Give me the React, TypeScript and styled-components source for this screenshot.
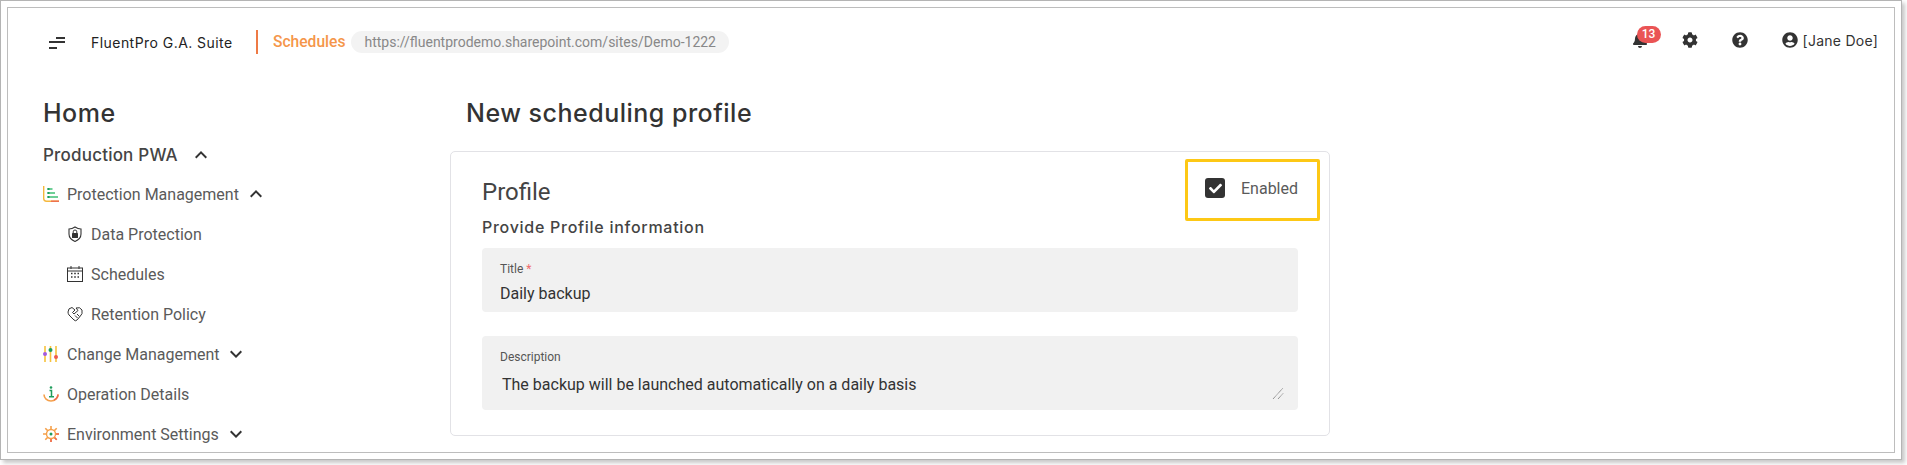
import { ReactNode } from 'react';
import styled, { createGlobalStyle } from 'styled-components';
import { FaBell, FaCog, FaQuestionCircle, FaUserCircle, FaCheck } from 'react-icons/fa';
import { MdKeyboardArrowUp, MdKeyboardArrowDown } from 'react-icons/md';

const GlobalStyle = createGlobalStyle`
  html, body {
    margin: 0;
    height: 100%;
    background: #fff;
    overflow: hidden;
  }
  body {
    font-family: Roboto, "Liberation Sans", sans-serif;
  }
`;

const heading = `Inter, "Open Sans", sans-serif`;

const Screenshot = styled.div`
  box-sizing: border-box;
  width: 1902px;
  height: 460px;
  padding: 6px;
  border: 1px solid #b4b4b4;
  background: #fff;
  box-shadow: 3px 3px 4px rgba(0, 0, 0, 0.22);
`;
const Frame = styled.div`
  box-sizing: border-box;
  height: 100%;
  border: 1px solid #bdbdbd;
  overflow: hidden;
`;
const Header = styled.header`
  height: 68px;
  display: flex;
  align-items: center;
  padding: 0 16px 0 39px;
`;
const MenuButton = styled.svg`
  width: 20px;
  height: 14px;
  margin-right: 24px;
`;
const Brand = styled.span`
  width: 141px;
  font-family: ${heading};
  font-size: 14px;
  letter-spacing: 0.45px;
  color: #222;
  white-space: nowrap;
`;
const Divider = styled.span`
  width: 2px;
  height: 24px;
  margin: 0 15px 0 24px;
  background: #ee7a45;
`;
const Section = styled.span`
  font-size: 15.6px;
  font-weight: 500;
  color: #f5964a;
  margin-right: 6px;
`;
const UrlPill = styled.span`
  height: 22px;
  line-height: 22px;
  padding: 0 13px;
  border-radius: 11px;
  background: #f3f3f3;
  color: #888;
  font-size: 14px;
  white-space: nowrap;
`;
const Actions = styled.div`
  margin-left: auto;
  margin-bottom: 4px;
  display: flex;
  align-items: center;
  color: #333;
`;
const IconSlot = styled.span`
  position: relative;
  display: flex;
  width: 16px;
  height: 16px;
  margin-right: 34px;
  font-size: 16px;
`;
const Badge = styled.span`
  position: absolute;
  left: 5px;
  top: -6px;
  width: 24px;
  height: 17px;
  border-radius: 9px;
  background: #ea5455;
  color: #fff;
  font-size: 12px;
  font-weight: 500;
  line-height: 17px;
  text-align: center;
`;
const User = styled.span`
  display: flex;
  align-items: center;
  gap: 5px;
  font-family: ${heading};
  font-size: 14px;
  letter-spacing: 0.25px;
  color: #333;
  & > svg {
    font-size: 16px;
  }
`;
const Main = styled.main`
  display: grid;
  grid-template-columns: 442px 880px;
  padding-top: 16px;
`;
const Sidebar = styled.nav`
  padding-left: 35px;
`;
const HomeTitle = styled.h1`
  margin: 0 0 2px;
  height: 40px;
  line-height: 42px;
  font-family: ${heading};
  font-size: 25px;
  letter-spacing: 0.5px;
  font-weight: 500;
  color: #333;
`;
const NavRow = styled.div<{ $level: number }>`
  display: flex;
  align-items: center;
  height: 40px;
  padding-left: ${(p) => p.$level * 24}px;
  color: #5a5a5a;
  font-size: 16px;
  white-space: nowrap;
`;
const GroupRow = styled(NavRow)`
  padding-top: 1px;
  box-sizing: border-box;
  font-family: ${heading};
  font-size: 17px;
  letter-spacing: 0.2px;
  font-weight: 500;
  color: #444;
`;
const NavIcon = styled.svg`
  flex: none;
  width: 16px;
  height: 16px;
  margin-right: 8px;
`;
const Chevron = styled.span<{ $gap: number; $size: number }>`
  display: flex;
  margin-left: ${(p) => p.$gap}px;
  font-size: ${(p) => p.$size}px;
  color: #333;
`;
const Content = styled.section``;
const PageTitle = styled.h2`
  margin: 0 0 19px 16px;
  height: 40px;
  line-height: 42px;
  font-family: ${heading};
  font-size: 25px;
  letter-spacing: 0.5px;
  font-weight: 500;
  color: #333;
`;
const Card = styled.div`
  position: relative;
  box-sizing: border-box;
  height: 285px;
  padding: 22px 31px 0 31px;
  border: 1px solid #e2e2e6;
  border-radius: 5px;
`;
const CardTitle = styled.h3`
  margin: 0 0 7px;
  height: 36px;
  line-height: 36px;
  font-size: 24px;
  font-weight: 400;
  color: #444;
`;
const Subtitle = styled.h4`
  margin: 0 0 11px;
  height: 20px;
  line-height: 20px;
  font-family: ${heading};
  font-size: 16px;
  letter-spacing: 0.72px;
  font-weight: 500;
  color: #444;
`;
const Field = styled.div<{ $height: number; $gap: number }>`
  position: relative;
  box-sizing: border-box;
  height: ${(p) => p.$height}px;
  margin-bottom: ${(p) => p.$gap}px;
  padding: 14px 18px 0;
  background: #f1f1f1;
  border-radius: 4px;
`;
const FieldLabel = styled.div`
  height: 14px;
  line-height: 14px;
  font-size: 12px;
  color: #555;
`;
const Required = styled.span`
  color: #ee6b6e;
`;
const FieldValue = styled.div<{ $indent?: number; $top: number }>`
  margin: ${(p) => p.$top}px 0 0 ${(p) => p.$indent ?? 0}px;
  height: 20px;
  line-height: 20px;
  font-size: 16px;
  color: #333;
`;
const Resizer = styled.svg`
  position: absolute;
  right: 14px;
  bottom: 11px;
  width: 12px;
  height: 12px;
`;
const Highlight = styled.div`
  position: absolute;
  top: 7px;
  right: 9px;
  box-sizing: border-box;
  width: 135px;
  height: 62px;
  display: flex;
  align-items: center;
  padding: 0 0 4px 17px;
  gap: 16px;
  border: 3px solid #fdc815;
  border-radius: 2px;
  background: #fff;
  color: #5a5a5a;
  font-size: 16px;
`;
const CheckBox = styled.span`
  display: flex;
  align-items: center;
  justify-content: center;
  width: 20px;
  height: 20px;
  border-radius: 3px;
  background: #333;
  color: #fff;
  font-size: 13px;
`;

const ProtectionIcon = () => (
  <NavIcon viewBox="0 0 16 16" fill="none">
    <path d="M0.700 0V12.500Q0.700 15.200 3.500 15.200H16" stroke="#f5b83d" strokeWidth="1.400" />
    <path d="M8 15.200H16" stroke="#ee6a50" strokeWidth="1.400" />
    <path d="M4.500 3H9.500M4.500 7H12M4.500 11H15" stroke="#6fcf97" strokeWidth="2.200" />
    <path d="M4.500 3H6.500M4.500 7H6.500M4.500 11H6.500" stroke="#1f9d5c" strokeWidth="2.200" />
  </NavIcon>
);
const ShieldIcon = () => (
  <NavIcon viewBox="0 0 16 16" fill="none">
    <path d="M2 3Q5 3 8 1Q11 3 14 3V8Q14 13 8 15.400Q2 13 2 8Z" stroke="#333" strokeWidth="1.100" />
    <rect x="5" y="7" width="6" height="5" rx="0.600" fill="#333" />
    <path d="M6.200 7V5.800A1.800 1.800 0 0 1 9.800 5.800V7" stroke="#333" strokeWidth="1" />
  </NavIcon>
);
const CalendarIcon = () => (
  <NavIcon viewBox="0 0 16 16" fill="none">
    <rect x="0.500" y="2" width="15" height="13.500" stroke="#333" />
    <path d="M4 0V3M12 0V3M0.500 5H15.500" stroke="#333" />
    <path d="M4 7.500H5.500M7.200 7.500H8.800M10.500 7.500H12M4 11H5.500M7.200 11H8.800M10.500 11H12" stroke="#333" strokeWidth="1.400" />
  </NavIcon>
);
const RetentionIcon = () => (
  <NavIcon viewBox="0 0 16 16" fill="none" stroke="#333" strokeWidth="1">
    <path d="M1 6Q1 2 5 1.500L8 4L5.500 6.500L7 8L11 4.500L9 2Q13 0.500 15 4Q16 8 13 10.500L10 14Q8.500 15.500 7 14L2 9Q1 7.500 1 6Z" />
    <path d="M8 9.500L10.500 12M10 8L12.500 10.500" />
  </NavIcon>
);
const ChangeIcon = () => (
  <NavIcon viewBox="0 0 16 16" fill="none">
    <path d="M2 0V16M7.500 0V16M13 0V16" stroke="#f7c23c" strokeWidth="1.600" />
    <circle cx="2" cy="8" r="2" fill="#a35be0" />
    <circle cx="7.500" cy="4" r="2" fill="#1f9d5c" />
    <circle cx="13" cy="11" r="2" fill="#ee5a4f" />
  </NavIcon>
);
const InfoIcon = () => (
  <NavIcon viewBox="0 0 16 16" fill="none">
    <path d="M1 8.500A7 6.500 0 0 0 15 8.500" stroke="#f5a04a" strokeWidth="1.600" />
    <path d="M11 14A7 6.500 0 0 0 15 8.500" stroke="#ee6a50" strokeWidth="1.600" />
    <circle cx="8" cy="1.500" r="1.300" fill="#1f9d5c" />
    <path d="M6.500 4.500H8.500V10.500M6 10.800H11" stroke="#1f9d5c" strokeWidth="1.500" />
  </NavIcon>
);
const EnvIcon = () => (
  <NavIcon viewBox="0 0 16 16" fill="none">
    <path d="M8 0V16M0 8H16M2.300 2.300L13.700 13.700M13.700 2.300L2.300 13.700" stroke="#f5a04a" strokeWidth="1.600" />
    <path d="M8 8H16M8 8L13.700 13.700M8 8V16" stroke="#ee6a50" strokeWidth="1.600" />
    <circle cx="8" cy="8" r="4.500" fill="#fff" stroke="#f5a04a" strokeWidth="1.400" />
    <circle cx="8" cy="8" r="1.500" fill="#1f9d5c" />
  </NavIcon>
);

type NavItem = { label: string; level: number; icon: ReactNode; open?: boolean };

const navItems: NavItem[] = [
  { label: 'Protection Management', level: 1, icon: <ProtectionIcon />, open: true },
  { label: 'Data Protection', level: 2, icon: <ShieldIcon /> },
  { label: 'Schedules', level: 2, icon: <CalendarIcon /> },
  { label: 'Retention Policy', level: 2, icon: <RetentionIcon /> },
  { label: 'Change Management', level: 1, icon: <ChangeIcon />, open: false },
  { label: 'Operation Details', level: 1, icon: <InfoIcon /> },
  { label: 'Environment Settings', level: 1, icon: <EnvIcon />, open: false },
];

export default function App() {
  return (
    <>
      <GlobalStyle />
      <Screenshot>
        <Frame>
          <Header>
            <MenuButton viewBox="0 0 20 14">
              <path d="M9 3H18M2 7H18M2 13H10" stroke="#333" strokeWidth="1.800" />
            </MenuButton>
            <Brand>FluentPro G.A. Suite</Brand>
            <Divider />
            <Section>Schedules</Section>
            <UrlPill>https://fluentprodemo.sharepoint.com/sites/Demo-1222</UrlPill>
            <Actions>
              <IconSlot>
                <FaBell />
                <Badge>13</Badge>
              </IconSlot>
              <IconSlot>
                <FaCog />
              </IconSlot>
              <IconSlot>
                <FaQuestionCircle />
              </IconSlot>
              <User>
                <FaUserCircle />
                [Jane Doe]
              </User>
            </Actions>
          </Header>
          <Main>
            <Sidebar>
              <HomeTitle>Home</HomeTitle>
              <GroupRow $level={0}>
                Production PWA
                <Chevron $gap={11} $size={24}>
                  <MdKeyboardArrowUp />
                </Chevron>
              </GroupRow>
              {navItems.map((item) => (
                <NavRow key={item.label} $level={item.level === 2 ? 1 : 0}>
                  {item.icon}
                  {item.label}
                  {item.open !== undefined && (
                    <Chevron $gap={5} $size={24}>
                      {item.open ? <MdKeyboardArrowUp /> : <MdKeyboardArrowDown />}
                    </Chevron>
                  )}
                </NavRow>
              ))}
            </Sidebar>
            <Content>
              <PageTitle>New scheduling profile</PageTitle>
              <Card>
                <CardTitle>Profile</CardTitle>
                <Subtitle>Provide Profile information</Subtitle>
                <Field $height={64} $gap={24}>
                  <FieldLabel>
                    Title <Required>*</Required>
                  </FieldLabel>
                  <FieldValue $top={8}>Daily backup</FieldValue>
                </Field>
                <Field $height={74} $gap={0}>
                  <FieldLabel>Description</FieldLabel>
                  <FieldValue $top={11} $indent={2}>
                    The backup will be launched automatically on a daily basis
                  </FieldValue>
                  <Resizer viewBox="0 0 12 12">
                    <path d="M1 12L11 1M6 12L11 6.500" stroke="#555" strokeWidth="0.800" strokeDasharray="1 0.600" />
                  </Resizer>
                </Field>
                <Highlight>
                  <CheckBox>
                    <FaCheck />
                  </CheckBox>
                  Enabled
                </Highlight>
              </Card>
            </Content>
          </Main>
        </Frame>
      </Screenshot>
    </>
  );
}
